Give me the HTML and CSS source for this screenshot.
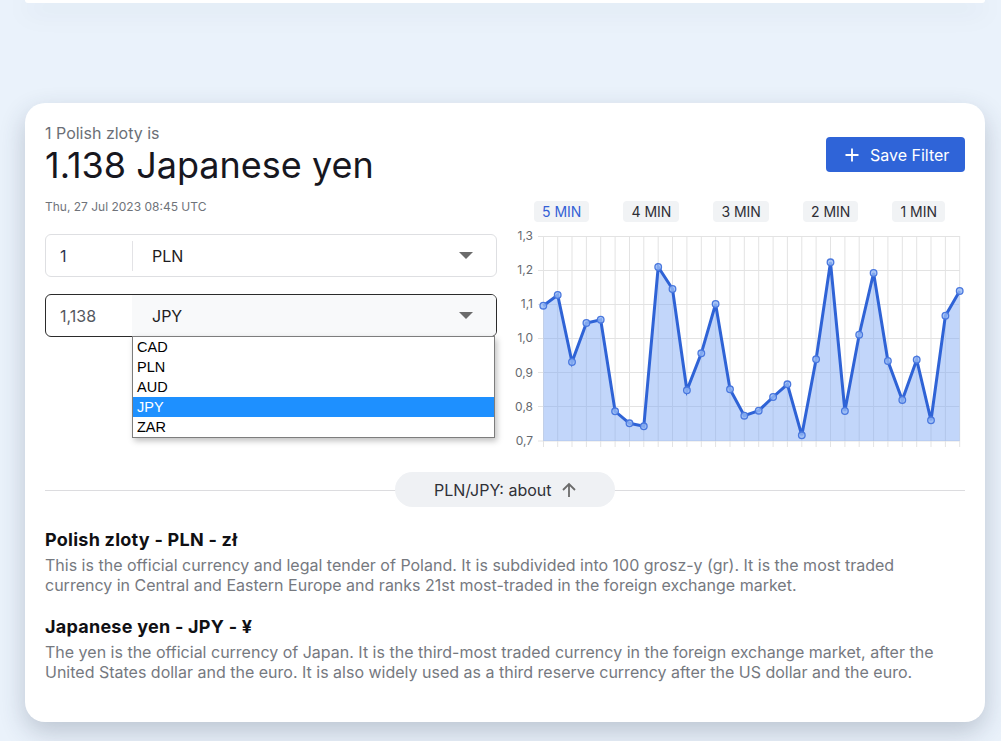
FILE: index.html
```html
<!DOCTYPE html>
<html lang="en">
<head>
<meta charset="utf-8">
<title>PLN to JPY</title>
<link rel="stylesheet" href="styles.css">
</head>
<body>
<div class="page">
  <div class="top-card"></div>

  <section class="card">
    <header class="head">
      <div class="head-text">
        <div class="sub">1 Polish zloty is</div>
        <h1 class="result">1.138 Japanese yen</h1>
      </div>
      <button class="save-btn" type="button">
        <svg class="plus" width="14" height="14" viewBox="0 0 14 14"><path d="M7 0.5V13.5M0.5 7H13.5" stroke="#fff" stroke-width="1.8" fill="none"/></svg>
        <span>Save Filter</span>
      </button>
    </header>

    <div class="main">
      <div class="left">
        <div class="date">Thu, 27 Jul 2023 08:45 UTC</div>
        <div class="field">
          <div class="amount amount-dark">1</div>
          <div class="sep"></div>
          <div class="currency">PLN</div>
          <svg class="caret" width="14" height="7" viewBox="0 0 14 7"><path d="M0 0H14L7 7Z" fill="#6b6b6b"/></svg>
        </div>
        <div class="field field-open">
          <div class="amount">1,138</div>
          <div class="currency currency-open">JPY
            <svg class="caret" width="14" height="7" viewBox="0 0 14 7"><path d="M0 0H14L7 7Z" fill="#6b6b6b"/></svg>
          </div>
          <ul class="dropdown">
            <li>CAD</li>
            <li>PLN</li>
            <li>AUD</li>
            <li class="selected">JPY</li>
            <li>ZAR</li>
          </ul>
        </div>
      </div>

      <div class="right">
        <div class="tabs">
          <span class="tab active">5 MIN</span>
          <span class="tab">4 MIN</span>
          <span class="tab">3 MIN</span>
          <span class="tab">2 MIN</span>
          <span class="tab">1 MIN</span>
        </div>
        <svg class="chart" width="460" height="230" viewBox="0 0 460 230">
          <g class="grid" stroke="#e3e3e3" stroke-width="1">
            <line x1="33" y1="8.5" x2="455" y2="8.5"/>
            <line x1="33" y1="42.5" x2="455" y2="42.5"/>
            <line x1="33" y1="76.5" x2="455" y2="76.5"/>
            <line x1="33" y1="110.5" x2="455" y2="110.5"/>
            <line x1="33" y1="144.5" x2="455" y2="144.5"/>
            <line x1="33" y1="178.5" x2="455" y2="178.5"/>
            <line x1="33" y1="213" x2="455" y2="213"/>
            <line x1="38.5" y1="8" x2="38.5" y2="219"/>
            <line x1="52.7" y1="8" x2="52.7" y2="219"/>
            <line x1="67" y1="8" x2="67" y2="219"/>
            <line x1="81.4" y1="8" x2="81.4" y2="219"/>
            <line x1="95.7" y1="8" x2="95.7" y2="219"/>
            <line x1="110.1" y1="8" x2="110.1" y2="219"/>
            <line x1="124.5" y1="8" x2="124.5" y2="219"/>
            <line x1="138.8" y1="8" x2="138.8" y2="219"/>
            <line x1="153.2" y1="8" x2="153.2" y2="219"/>
            <line x1="167.5" y1="8" x2="167.5" y2="219"/>
            <line x1="181.9" y1="8" x2="181.9" y2="219"/>
            <line x1="196.3" y1="8" x2="196.3" y2="219"/>
            <line x1="210.6" y1="8" x2="210.6" y2="219"/>
            <line x1="225" y1="8" x2="225" y2="219"/>
            <line x1="239.3" y1="8" x2="239.3" y2="219"/>
            <line x1="253.7" y1="8" x2="253.7" y2="219"/>
            <line x1="268.1" y1="8" x2="268.1" y2="219"/>
            <line x1="282.4" y1="8" x2="282.4" y2="219"/>
            <line x1="296.8" y1="8" x2="296.8" y2="219"/>
            <line x1="311.1" y1="8" x2="311.1" y2="219"/>
            <line x1="325.5" y1="8" x2="325.5" y2="219"/>
            <line x1="339.9" y1="8" x2="339.9" y2="219"/>
            <line x1="354.2" y1="8" x2="354.2" y2="219"/>
            <line x1="368.6" y1="8" x2="368.6" y2="219"/>
            <line x1="382.9" y1="8" x2="382.9" y2="219"/>
            <line x1="397.3" y1="8" x2="397.3" y2="219"/>
            <line x1="411.7" y1="8" x2="411.7" y2="219"/>
            <line x1="426" y1="8" x2="426" y2="219"/>
            <line x1="440.4" y1="8" x2="440.4" y2="219"/>
            <line x1="454.7" y1="8" x2="454.7" y2="219"/>
          </g>
          <g class="ylabels">
            <text x="28" y="12">1,3</text>
            <text x="28" y="46">1,2</text>
            <text x="28" y="80">1,1</text>
            <text x="28" y="114">1,0</text>
            <text x="28" y="149">0,9</text>
            <text x="28" y="183">0,8</text>
            <text x="28" y="217">0,7</text>
          </g>
          <polygon class="area" points="38.3,77.7 52.7,67 67,134 81.4,95 95.7,91.7 110.1,183.3 124.5,195.3 138.8,198.3 153.2,39 167.5,61 181.9,162.3 196.3,125.3 210.6,76 225,161.3 239.3,187.7 253.7,182.7 268.1,169 282.4,156.3 296.8,207.3 311.1,131.3 325.5,34.3 339.9,183 354.2,106.7 368.6,45 382.9,133 397.3,172 411.7,131.7 426,192.3 440.4,87.7 454.7,63 454.7,213 38.3,213"/>
          <polyline class="line" points="38.3,77.7 52.7,67 67,134 81.4,95 95.7,91.7 110.1,183.3 124.5,195.3 138.8,198.3 153.2,39 167.5,61 181.9,162.3 196.3,125.3 210.6,76 225,161.3 239.3,187.7 253.7,182.7 268.1,169 282.4,156.3 296.8,207.3 311.1,131.3 325.5,34.3 339.9,183 354.2,106.7 368.6,45 382.9,133 397.3,172 411.7,131.7 426,192.3 440.4,87.7 454.7,63"/>
          <g class="dots">
            <circle cx="38.3" cy="77.7" r="3.3"/><circle cx="52.7" cy="67" r="3.3"/><circle cx="67" cy="134" r="3.3"/><circle cx="81.4" cy="95" r="3.3"/><circle cx="95.7" cy="91.7" r="3.3"/><circle cx="110.1" cy="183.3" r="3.3"/><circle cx="124.5" cy="195.3" r="3.3"/><circle cx="138.8" cy="198.3" r="3.3"/><circle cx="153.2" cy="39" r="3.3"/><circle cx="167.5" cy="61" r="3.3"/><circle cx="181.9" cy="162.3" r="3.3"/><circle cx="196.3" cy="125.3" r="3.3"/><circle cx="210.6" cy="76" r="3.3"/><circle cx="225" cy="161.3" r="3.3"/><circle cx="239.3" cy="187.7" r="3.3"/><circle cx="253.7" cy="182.7" r="3.3"/><circle cx="268.1" cy="169" r="3.3"/><circle cx="282.4" cy="156.3" r="3.3"/><circle cx="296.8" cy="207.3" r="3.3"/><circle cx="311.1" cy="131.3" r="3.3"/><circle cx="325.5" cy="34.3" r="3.3"/><circle cx="339.9" cy="183" r="3.3"/><circle cx="354.2" cy="106.7" r="3.3"/><circle cx="368.6" cy="45" r="3.3"/><circle cx="382.9" cy="133" r="3.3"/><circle cx="397.3" cy="172" r="3.3"/><circle cx="411.7" cy="131.7" r="3.3"/><circle cx="426" cy="192.3" r="3.3"/><circle cx="440.4" cy="87.7" r="3.3"/><circle cx="454.7" cy="63" r="3.3"/>
          </g>
        </svg>
      </div>
    </div>

    <div class="divider">
      <span class="pill">PLN/JPY: about
        <svg width="16" height="16" viewBox="0 0 16 16"><path d="M8 15V2M2 8L8 2L14 8" stroke="#6b6b6b" stroke-width="1.8" fill="none"/></svg>
      </span>
    </div>

    <div class="about">
      <h2>Polish zloty - PLN - zł</h2>
      <p>This is the official currency and legal tender of Poland. It is subdivided into 100 grosz-y (gr). It is the most traded currency in Central and Eastern Europe and ranks 21st most-traded in the foreign exchange market.</p>
      <h2>Japanese yen - JPY - ¥</h2>
      <p>The yen is the official currency of Japan. It is the third-most traded currency in the foreign exchange market, after the United States dollar and the euro. It is also widely used as a third reserve currency after the US dollar and the euro.</p>
    </div>
  </section>
</div>
</body>
</html>
```

FILE: styles.css
```css
* { box-sizing: border-box; }

html, body {
  margin: 0;
  padding: 0;
  background: #eaf2fb;
  font-family: Inter, "Noto Sans", sans-serif;
  color: #1b1b24;
}

.page {
  width: 1001px;
  height: 741px;
  overflow: hidden;
  padding: 0 16px 0 25px;
}

.top-card {
  height: 3px;
  width: 960px;
  background: #fff;
  border-radius: 0 0 20px 20px;
  box-shadow: 0 6px 26px rgba(40, 55, 80, 0.22);
  position: relative;
}

.card {
  width: 960px;
  margin-top: 100px;
  background: #fff;
  border-radius: 20px;
  box-shadow: 0 10px 26px rgba(40, 55, 80, 0.24);
  padding: 21px 20px 40px 20px;
}

.head {
  display: flex;
  justify-content: space-between;
  align-items: flex-start;
}

.sub {
  font-size: 16px;
  line-height: 19px;
  color: #6b6f76;
}

.result {
  margin: 0;
  font-size: 36px;
  line-height: 44px;
  font-weight: 400;
  color: #17171f;
}

.save-btn {
  margin-top: 13px;
  height: 35px;
  width: 139px;
  display: flex;
  align-items: center;
  gap: 11px;
  padding: 0 0 0 19px;
  border: 0;
  border-radius: 4px;
  background: #2f64d8;
  color: #fff;
  font-family: Inter, sans-serif;
  font-size: 16px;
}

.main {
  display: grid;
  grid-template-columns: 452px 460px;
  column-gap: 8px;
}

.date {
  margin-top: 12px;
  font-size: 12px;
  line-height: 16px;
  color: #6f737a;
}

.field {
  position: relative;
  height: 43px;
  margin-top: 19px;
  border: 1px solid #dedfe2;
  border-radius: 6px;
  display: flex;
  align-items: center;
}

.field + .field { margin-top: 17px; }

.amount {
  width: 86px;
  padding-left: 14px;
  font-size: 16px;
  color: #555860;
}

.amount-dark { color: #2c3550; }

.sep {
  width: 1px;
  height: 30px;
  background: #e3e3e6;
}

.currency {
  flex: 1;
  padding-left: 19px;
  font-size: 16px;
  color: #1d1d22;
}

.field .caret {
  position: absolute;
  right: 23px;
  top: 17px;
}

.field-open {
  border-color: #2b2b2b;
}

.currency-open {
  align-self: stretch;
  display: flex;
  align-items: center;
  background: #f8f9fa;
  border-radius: 0 5px 5px 0;
  padding-left: 20px;
}

.dropdown {
  position: absolute;
  top: 41px;
  left: 86px;
  width: 363px;
  margin: 0;
  padding: 0;
  list-style: none;
  background: #fff;
  border: 1px solid #7d7d7d;
  box-shadow: 2px 3px 6px rgba(0, 0, 0, 0.25);
  font-family: "Liberation Sans", Arial, sans-serif;
  font-size: 14.5px;
  z-index: 5;
}

.dropdown li {
  height: 20px;
  line-height: 20px;
  padding-left: 4px;
  color: #000;
}

.dropdown li.selected {
  background: #1e90ff;
  color: #fff;
}

.tabs {
  display: flex;
  justify-content: space-between;
  padding: 0 20px 0 29px;
  margin-top: 14px;
}

.tab {
  padding: 2px 8px;
  line-height: 17px;
  font-size: 14px;
  border-radius: 4px;
  background: #f1f3f5;
  color: #2e2e35;
}

.tab.active { color: #3461d6; }

.chart {
  display: block;
  margin-top: 6px;
}

.ylabels text {
  font-family: Inter, sans-serif;
  font-size: 12px;
  fill: #666a70;
  text-anchor: end;
}

.area { fill: rgba(120, 165, 245, 0.45); }

.line {
  fill: none;
  stroke: #2f63d6;
  stroke-width: 3;
  stroke-linejoin: miter;
}

.dots circle {
  fill: rgba(150, 185, 245, 0.8);
  stroke: #4a78de;
  stroke-width: 1.3;
}

.divider {
  margin-top: 14px;
  display: flex;
  align-items: center;
  justify-content: center;
  position: relative;
  height: 35px;
}

.divider::before {
  content: "";
  position: absolute;
  left: 0;
  right: 0;
  top: 18px;
  height: 1px;
  background: #dcdcdf;
}

.pill {
  position: relative;
  display: flex;
  align-items: center;
  gap: 10px;
  height: 35px;
  width: 220px;
  padding-left: 39px;
  border-radius: 18px;
  background: #eff1f4;
  font-size: 16px;
  color: #2f3037;
}

.about h2 {
  margin: 21px 0 0 0;
  font-size: 18px;
  line-height: 24px;
  font-weight: 700;
  letter-spacing: 0.25px;
  color: #101014;
}

.about p {
  margin: 3px 0 0 0;
  font-size: 16px;
  line-height: 20px;
  color: #76797f;
}

.about p + h2 { margin-top: 20px; }
```
